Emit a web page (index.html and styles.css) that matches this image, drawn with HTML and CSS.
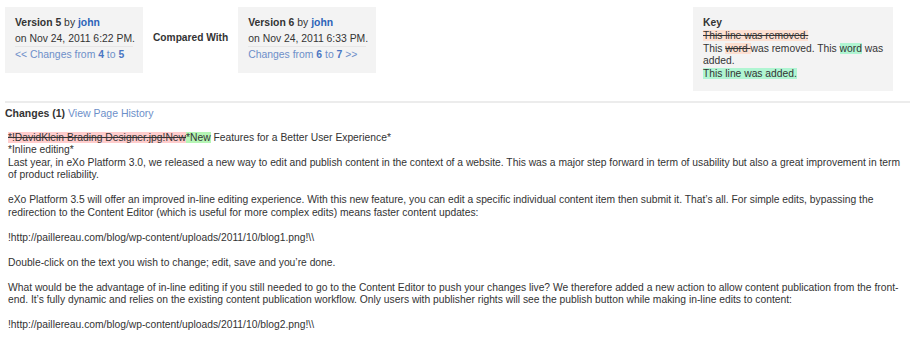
FILE: index.html
```html
<!DOCTYPE html>
<html>
<head>
<meta charset="utf-8">
<link rel="stylesheet" href="styles.css">
</head>
<body>
<div class="top">
  <div class="ver">
    <div class="ver-title"><b>Version 5</b> by <a class="user" href="#">john</a></div>
    <div class="ver-date">on Nov 24, 2011 6:22 PM.</div>
    <div class="ver-nav"><a href="#">&lt;&lt; Changes from <b>4</b> to <b>5</b></a></div>
  </div>
  <div class="cmp">Compared With</div>
  <div class="ver">
    <div class="ver-title"><b>Version 6</b> by <a class="user" href="#">john</a></div>
    <div class="ver-date">on Nov 24, 2011 6:33 PM.</div>
    <div class="ver-nav"><a href="#">Changes from <b>6</b> to <b>7</b> &gt;&gt;</a></div>
  </div>
  <div class="key">
    <div class="key-title">Key</div>
    <div><span class="k-del">This line was removed.</span></div>
    <div>This <span class="k-del">word </span>was removed. This <span class="k-add">word</span> was added.</div>
    <div><span class="k-add">This line was added.</span></div>
  </div>
</div>
<div class="rule"></div>
<div class="changes"><b>Changes (1)</b> <a href="#">View Page History</a></div>
<div class="diff">
<div><span class="d-del">*!DavidKlein Brading Designer.jpg!New</span><span class="d-add">*New</span> Features for a Better User Experience*</div>
<div>*Inline editing*</div>
<div>Last year, in eXo Platform 3.0, we released a new way to edit and publish content in the context of a website. This was a major step forward in term of usability but also a great improvement in term<br>of product reliability.</div>
<div class="blank"></div>
<div>eXo Platform 3.5 will offer an improved in-line editing experience. With this new feature, you can edit a specific individual content item then submit it. That’s all. For simple edits, bypassing the<br>redirection to the Content Editor (which is useful for more complex edits) means faster content updates:</div>
<div class="blank"></div>
<div>!http://paillereau.com/blog/wp-content/uploads/2011/10/blog1.png!\\</div>
<div class="blank"></div>
<div>Double-click on the text you wish to change; edit, save and you’re done.</div>
<div class="blank"></div>
<div>What would be the advantage of in-line editing if you still needed to go to the Content Editor to push your changes live? We therefore added a new action to allow content publication from the front-<br>end. It’s fully dynamic and relies on the existing content publication workflow. Only users with publisher rights will see the publish button while making in-line edits to content:</div>
<div class="blank"></div>
<div>!http://paillereau.com/blog/wp-content/uploads/2011/10/blog2.png!\\</div>
</div>
</body>
</html>
```
FILE: styles.css
```css
body {
  margin: 0;
  padding: 7px 10px 0 5px;
  font-family: "Liberation Sans", Arial, sans-serif;
  font-size: 10.5px;
  color: #333;
  background: #fff;
}
a { color: #3c6fc4; text-decoration: none; }
.top {
  display: flex;
  align-items: flex-start;
}
.ver {
  width: 118px;
  background: #f3f3f3;
  padding: 8px 10px 10px 10px;
  line-height: 15.5px;
  font-size: 10.4px;
  white-space: nowrap;
}
.ver-title a.user { font-weight: bold; color: #2d63b8; }
.ver-date { border-bottom: 1px solid #e6e6e6; }
.ver-nav a { color: #6d8fc9; }
.ver-nav b { color: #4a76c2; }
.cmp {
  font-weight: bold;
  font-size: 10.2px;
  white-space: nowrap;
  padding: 23px 10px 0;
  line-height: 15.5px;
}
.key {
  margin-left: auto;
  margin-right: 17px;
  width: 184px;
  background: #f3f3f3;
  padding: 10px 6px 10px 10px;
  line-height: 12.8px;
  font-size: 10.3px;
}
.key-title { font-weight: bold; }
.k-del { background: #fde0d2; text-decoration: line-through; }
.k-add { background: #b0f5d2; }
.rule {
  height: 2px;
  background: #ececec;
  margin: 10px 0 3px;
}
.changes { line-height: 14px; }
.changes a { color: #6d8fc9; }
.diff {
  margin-top: 12px;
  margin-right: -10px;
  padding-left: 3px;
  line-height: 12.5px;
  font-size: 10.3px;
}
.blank { height: 12.5px; }
.d-del { background: #ffcccc; text-decoration: line-through; }
.d-add { background: #b5f5b5; }
```
